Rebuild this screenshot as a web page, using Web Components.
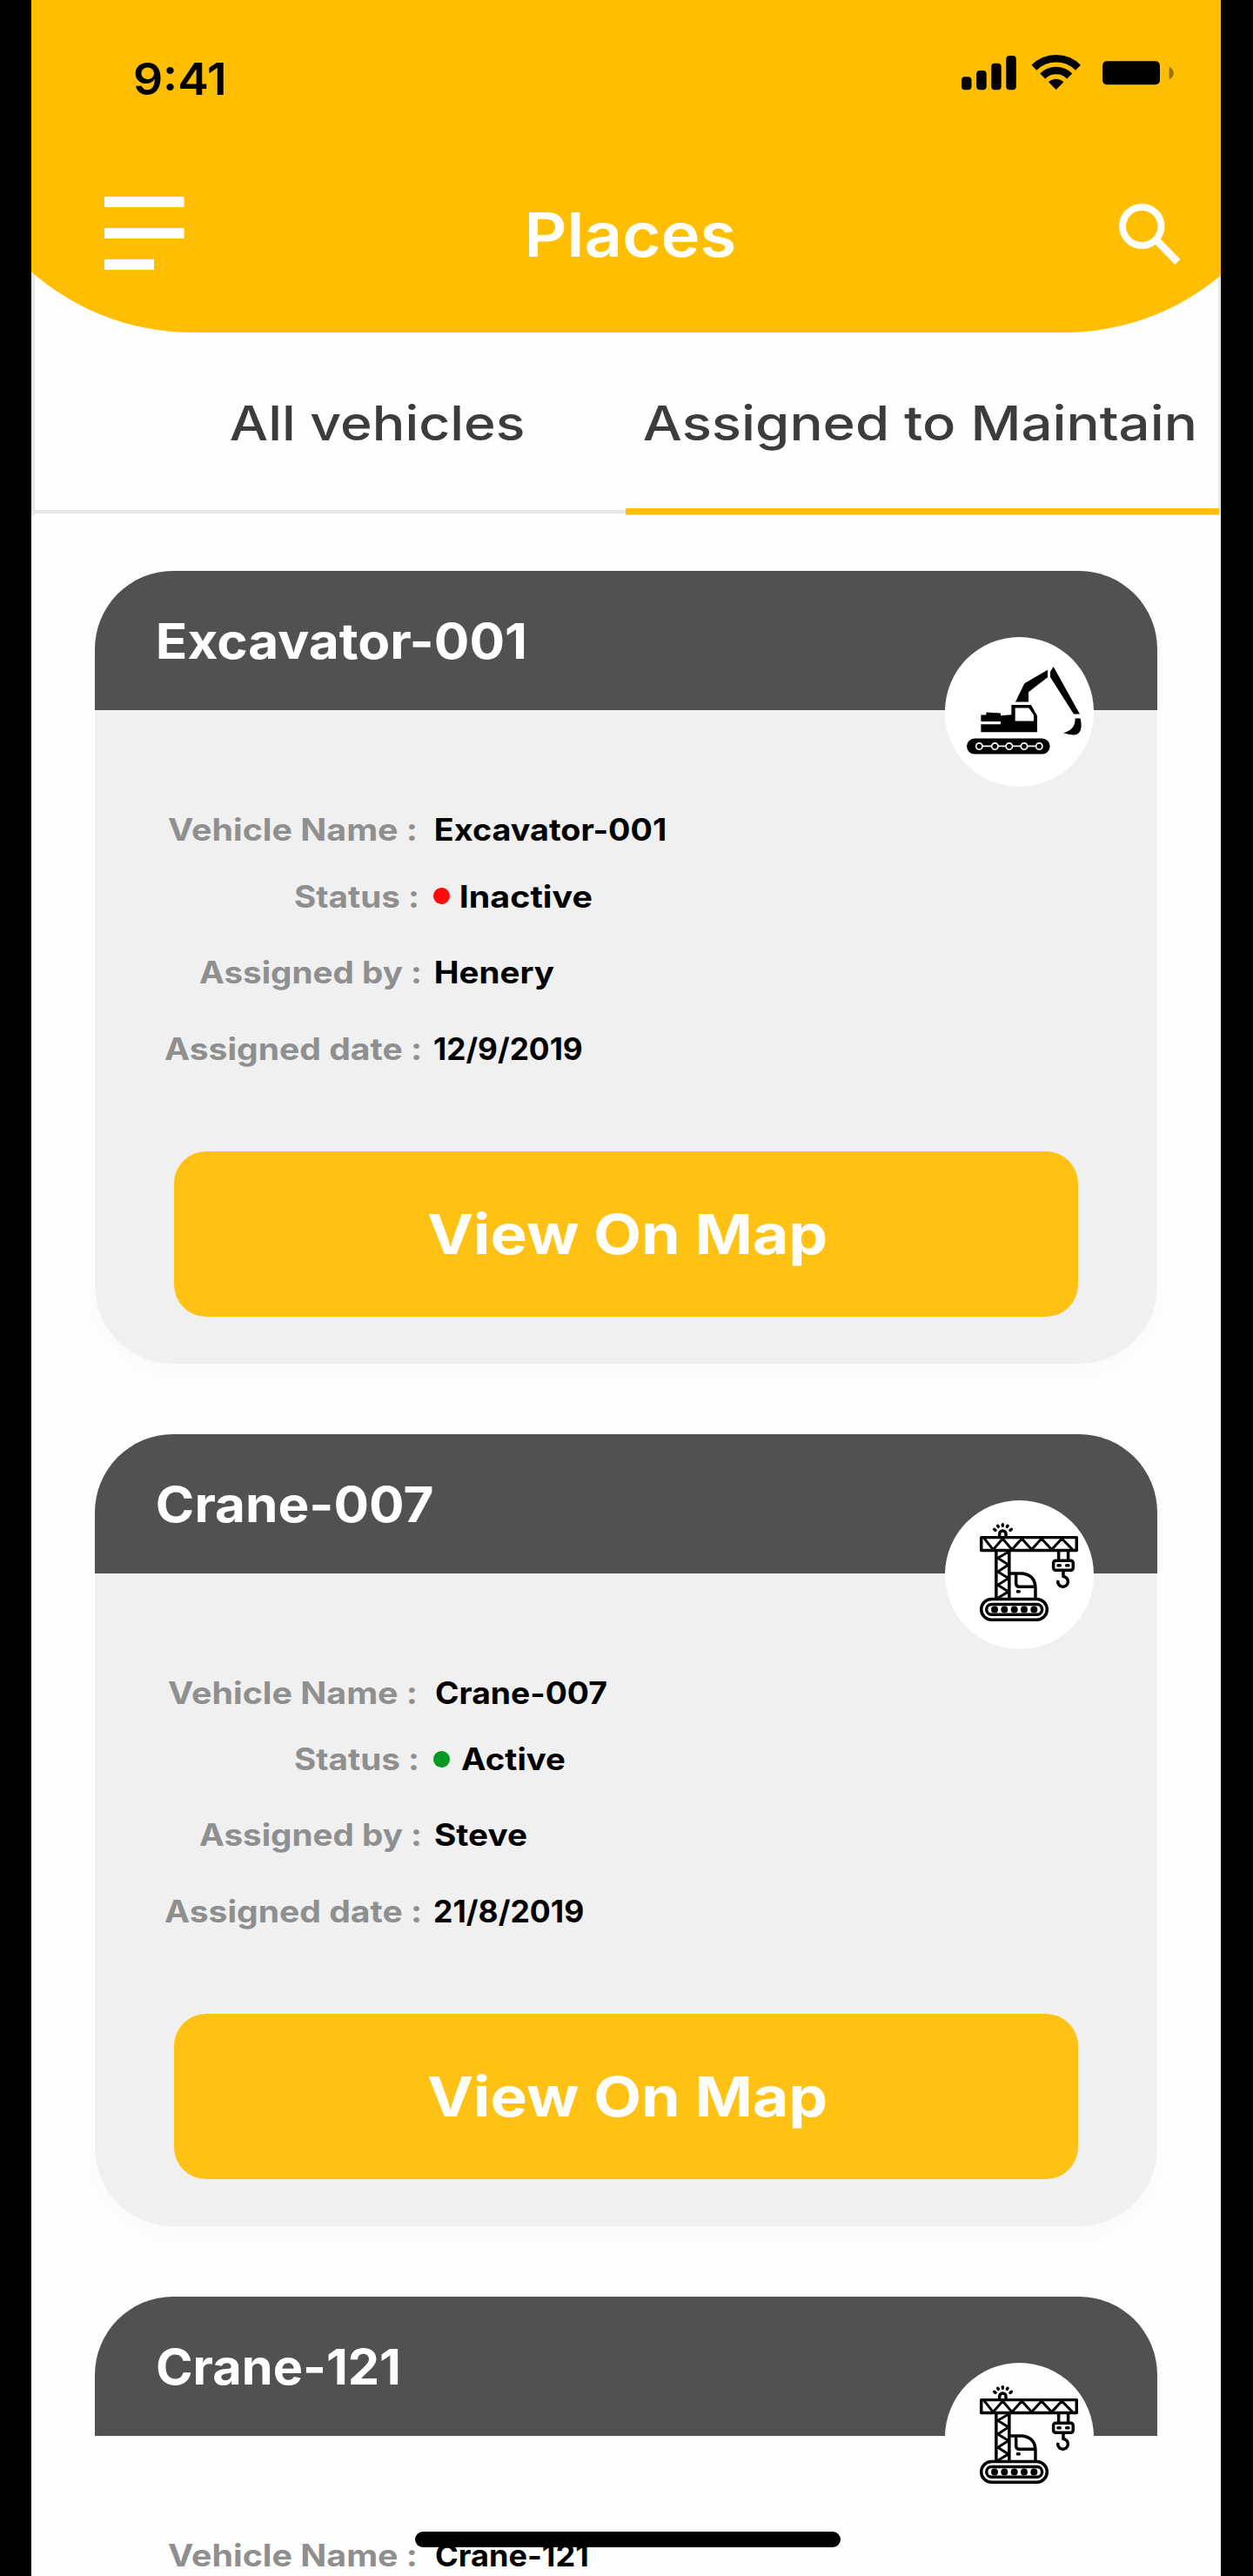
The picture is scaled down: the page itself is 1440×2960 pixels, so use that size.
<!DOCTYPE html>
<html lang="en">
<head>
<meta charset="utf-8">
<title>Places</title>
<style>
  html, body { margin: 0; background: #000; }
  body { height: 2960px; overflow: hidden; font-family: Inter, "Liberation Sans", sans-serif; }
</style>
</head>
<body>
<places-app></places-app>

<template id="t-app">
  <style>
    :host { display: block; box-sizing: border-box; width: 1440px; height: 2960px; padding: 0 37px 0 36px; background: #000; }
    main { position: relative; height: 2960px; overflow: hidden; background: #fefefe; }
    .list { display: flex; flex-direction: column; gap: 80.8px; padding: 64.4px 73px 0; }
    .home { position: absolute; left: 441px; top: 2909px; width: 489px; height: 18px; border-radius: 9px; background: #000; }
  </style>
  <main>
    <app-header></app-header>
    <app-tabs></app-tabs>
    <div class="list">
      <vehicle-card heading="Excavator-001" hx="73" hw="420.5" icon="excavator">
        <detail-row label="Vehicle Name :" start="84" lw="284" gap="24" vw="263" value="Excavator-001"></detail-row>
        <detail-row label="Status :" start="230.4" lw="140" gap="19" vw="150" value="Inactive" dot="#ff0a0a"></detail-row>
        <detail-row label="Assigned by :" start="120" lw="253" gap="19" vw="136" value="Henery"></detail-row>
        <detail-row label="Assigned date :" start="80" lw="293" gap="17" vw="170" value="12/9/2019"></detail-row>
      </vehicle-card>
      <vehicle-card heading="Crane-007" hx="71.5" hw="315.5" icon="crane">
        <detail-row label="Vehicle Name :" start="84" lw="284" gap="24" vw="196.5" value="Crane-007"></detail-row>
        <detail-row label="Status :" start="230.4" lw="140" gap="19" vw="119" value="Active" dot="#009a20"></detail-row>
        <detail-row label="Assigned by :" start="120" lw="253" gap="18" vw="105" value="Steve"></detail-row>
        <detail-row label="Assigned date :" start="80" lw="293" gap="17" vw="171.5" value="21/8/2019"></detail-row>
      </vehicle-card>
      <vehicle-card plain heading="Crane-121" hx="71.5" hw="276.5" icon="crane">
        <detail-row label="Vehicle Name :" start="84" lw="284" gap="24" vw="173.6" value="Crane-121"></detail-row>
      </vehicle-card>
    </div>
    <div class="home"></div>
  </main>
</template>

<template id="t-header">
  <style>
    :host { display: block; position: relative; z-index: 1; box-sizing: border-box; height: 382.4px; margin: 0 -100px 0 -95px; padding: 0 100px 0 95px; background: #ffbf00; border-radius: 0 0 280px 280px; }
    .status { display: flex; align-items: flex-start; justify-content: space-between; height: 226px; box-sizing: border-box; padding: 61px 52px 0 119px; }
    .time { color: #000; }
    .bar { display: flex; align-items: flex-start; justify-content: space-between; padding: 0 45px 0 84px; height: 90px; }
    .status svg { margin-top: -1px; }
    .title { color: #fff; margin: -1.5px 0 0 -46px; }
    svg { display: block; flex: none; }
    .glass { margin-top: 6px; }
  </style>
  <div class="status">
    <fit-text class="time" size="51" weight="600" line="60" w="102" text="9:41"></fit-text>
    <svg width="246" height="46" viewBox="1106 60 246 46">
      <rect x="1106" y="88.3" width="11.5" height="15" rx="4"/>
      <rect x="1123.2" y="81" width="11.5" height="22.3" rx="4"/>
      <rect x="1140.2" y="72.7" width="11.5" height="30.6" rx="4"/>
      <rect x="1157.3" y="64" width="11.5" height="39.3" rx="4"/>
      <g fill="none" stroke="#000" stroke-width="8.4">
        <path d="M1189.4,77.7 A35.8,35.8 0 0 1 1240,77.7"/>
        <path d="M1199.2,87.5 A21.9,21.9 0 0 1 1230.2,87.5"/>
      </g>
      <path d="M1214.7,103 L1206,94.3 A12.3,12.3 0 0 1 1223.4,94.3 Z"/>
      <rect x="1268" y="70.3" width="66" height="27" rx="5"/>
      <path d="M1344.6,76.7 Q1349.8,79.5 1349.8,84 Q1349.8,88.5 1344.6,91.3 Z" opacity=".4"/>
    </svg>
  </div>
  <div class="bar">
    <svg width="92" height="84" viewBox="0 0 92 84" fill="#fff">
      <rect width="91.5" height="12"/><rect y="36" width="91.5" height="12"/><rect y="72" width="57" height="12"/>
    </svg>
    <fit-text class="title" size="70" weight="600" line="90" w="235.5" text="Places"></fit-text>
    <svg class="glass" width="73" height="75" viewBox="1285 232 73 75" fill="none" stroke="#fff">
      <ellipse cx="1312.3" cy="260" rx="22.2" ry="22" stroke-width="8"/>
      <path d="M1329,276 L1353.4,301" stroke-width="8.6"/>
    </svg>
  </div>
</template>

<template id="t-tabs">
  <style>
    :host { display: flex; box-sizing: border-box; height: 279.6px; margin-top: -70px; }
    .tab { box-sizing: border-box; width: 682.5px; height: 279.6px; padding-top: 139px; color: #3e3b3d; }
    .a { border-left: 4px solid #e8e8e8; background: linear-gradient(#e8e8e8,#e8e8e8) 0 calc(100% - 1.6px) / 100% 4px no-repeat; padding-left: 225.4px; }
    .b { width: 684.5px; background: linear-gradient(#ffbf0c,#ffbf0c) 0 100% / calc(100% - 1.5px) 7.6px no-repeat, linear-gradient(#e8e8e8,#e8e8e8) 100% 0 / 3.5px calc(100% - 7.6px) no-repeat; padding-left: 21.2px; }
  </style>
  <div class="tab a"><fit-text size="55" weight="540" line="70" w="336.6" text="All vehicles"></fit-text></div>
  <div class="tab b"><fit-text size="55" weight="540" line="70" w="632.3" text="Assigned to Maintain"></fit-text></div>
</template>

<template id="t-card">
  <style>
    :host { display: block; position: relative; flex: none; width: 1221px; height: 910.6px; border-radius: 90px; background: #f0f0f0; box-shadow: 0 10px 26px rgba(0,0,0,.025); }
    :host([plain]) { background: none; box-shadow: none; }
    header { display: flex; align-items: center; box-sizing: border-box; height: 160px; border-radius: 90px 90px 0 0; background: #515151; color: #fff; padding-top: 2px; }
    .rows { height: 506.6px; box-sizing: border-box; padding-top: 117px; display: grid; grid-template-rows: 76.6px 86.9px 88.2px 40px; align-content: start; }
    .badge { position: absolute; left: 977px; top: 76px; width: 171px; height: 171.5px; border-radius: 50%; background: #fff; }
    .badge svg { display: block; width: 171px; height: 171.5px; }
    :host([plain]) .badge { background: #fefefe; }
    button { display: flex; align-items: center; justify-content: center; box-sizing: border-box; width: 1039px; height: 189.7px; margin: 0 0 0 91px; padding: 0 0 0 1px; border: 0; border-radius: 37px; background: #ffc114; color: #fff; font-family: inherit; }
  </style>
  <header></header>
  <div class="rows"><slot></slot></div>
  <button></button>
  <div class="badge"></div>
</template>

<template id="t-row">
  <style>
    :host { display: flex; align-items: center; height: 40px; }
    .label { color: #8f8f8f; }
    .value { color: #000; }
    .dot { width: 19px; height: 19px; border-radius: 50%; margin-right: 13px; }
  </style>
</template>

<template id="i-excavator">
  <svg viewBox="78 67 513 515">
    <path d="M321,291 L352,227 L432,180 V206 L366,257 V291Z"/>
    <path d="M441,187 L452,169 L543,333 H522 L441,205Z"/>
    <path d="M527,348 H545 Q549,362 548,377 Q545,405 522,405 Q504,404 486,398 Q528,388 527,348Z"/>
    <path d="M307,301 H375 L396,339 V395 H202 V368 H270 V358 H202 V336 H220 V327 L270,330 V338 L307,335Z"/>
    <path d="M320,312 H367 L384,336 V357 H320Z" fill="#fff"/>
    <rect x="153" y="417" width="287" height="54" rx="27"/>
    <g stroke="#fff" stroke-width="5">
      <path d="M196,443.500H403"/>
      <circle cx="196" cy="444" r="11"/><circle cx="250" cy="444" r="11"/><circle cx="299.500" cy="444" r="11"/><circle cx="351" cy="444" r="11"/><circle cx="403" cy="444" r="11"/>
    </g>
  </svg>
</template>

<template id="i-crane">
  <svg viewBox="78 72 513 515" fill="none" stroke="#000" stroke-width="10.5" stroke-linejoin="round">
    <rect x="203" y="200" width="329" height="45"/>
    <path stroke-width="9" d="M213,203 L244,242 L277,204 L309,242 L343,204 L377,242 L411,204 L446,242 L481,204 L518,242"/>
    <path d="M266,196 V188 A11,11 0 0 1 288,188 V196"/>
    <path stroke-linecap="round" d="M277,155V160M260,160L262,163M294,160L292,163M248,172L252,175M307,172L303,175"/>
    <path d="M254.500,248V410M299.500,248V410"/>
    <path stroke-width="9" d="M297,250 L260,271 L297,294 L260,318 L297,341 L260,364 L297,387 L260,409"/>
    <path d="M302,324 H345 Q390,330 390,376 V412M323,326 V358 Q323,370 335,370 H389"/>
    <rect x="323" y="381" width="16" height="11" rx="5" fill="#000" stroke="none"/>
    <rect x="203" y="413" width="227" height="71" rx="35.500"/>
    <rect x="221" y="431" width="192" height="35" rx="17.500"/>
    <g fill="#000" stroke="none"><circle cx="249" cy="448.500" r="12"/><circle cx="283" cy="448.500" r="12"/><circle cx="317" cy="448.500" r="12"/><circle cx="351" cy="448.500" r="12"/><circle cx="385" cy="448.500" r="12"/>
      <rect x="463" y="291" width="17" height="11" rx="5"/><rect x="492" y="291" width="17" height="11" rx="5"/></g>
    <path d="M470,248V278M503,248V278"/>
    <rect x="452" y="280" width="68" height="33" rx="8"/>
    <path d="M486,316 V335 A17.500,17.500 0 1 1 468,348"/>
  </svg>
</template>

<script>
  const stamp = (el, id) => {
    const root = el.attachShadow({ mode: 'open' });
    root.append(document.getElementById(id).content.cloneNode(true));
    return root;
  };
  const ctx = document.createElement('canvas').getContext('2d');

  // One line of text whose drawn letters span exactly `w` pixels.
  class FitText extends HTMLElement {
    connectedCallback() {
      if (this.shadowRoot) return;
      const size = this.getAttribute('size'), weight = this.getAttribute('weight');
      const line = this.getAttribute('line'), w = +this.getAttribute('w'), text = this.getAttribute('text');
      ctx.font = `${weight} ${size}px Inter, "Liberation Sans", sans-serif`;
      const m = ctx.measureText(text);
      const left = m.actualBoundingBoxLeft;
      const k = w / (m.actualBoundingBoxRight + left);
      const root = this.attachShadow({ mode: 'open' });
      root.innerHTML = `<style>
        :host { display: block; flex: none; width: ${w}px; height: ${line}px; text-align: left; }
        span { display: inline-block; white-space: pre; font: ${weight} ${size}px/${line}px Inter, "Liberation Sans", sans-serif;
          transform-origin: 0 50%; transform: translateX(${left * k}px) scaleX(${k}); }
      </style><span></span>`;
      root.querySelector('span').textContent = text;
    }
  }
  const fit = (text, size, weight, line, w, cls) => {
    const f = document.createElement('fit-text');
    for (const [k, v] of Object.entries({ text, size, weight, line, w, class: cls || '' })) f.setAttribute(k, v);
    return f;
  };

  class DetailRow extends HTMLElement {
    connectedCallback() {
      if (this.shadowRoot) return;
      const root = stamp(this, 't-row'), a = n => this.getAttribute(n);
      const label = fit(a('label'), 35, 650, 40, a('lw'), 'label');
      label.style.margin = `0 ${a('gap')}px 0 ${a('start')}px`;
      root.append(label);
      if (a('dot')) {
        const dot = document.createElement('i');
        dot.className = 'dot';
        dot.style.background = a('dot');
        root.append(dot);
      }
      root.append(fit(a('value'), 35, 670, 40, a('vw'), 'value'));
    }
  }

  class VehicleCard extends HTMLElement {
    connectedCallback() {
      if (this.shadowRoot) return;
      const root = stamp(this, 't-card');
      const title = fit(this.getAttribute('heading'), 56.5, 700, 70, this.getAttribute('hw'));
      title.style.marginLeft = this.getAttribute('hx') + 'px';
      root.querySelector('header').append(title);
      root.querySelector('.badge').append(document.getElementById('i-' + this.getAttribute('icon')).content.cloneNode(true));
      if (this.hasAttribute('plain')) root.querySelector('button').remove();
      else root.querySelector('button').append(fit('View On Map', 63.5, 700, 80, 457));
    }
  }

  customElements.define('fit-text', FitText);
  customElements.define('detail-row', DetailRow);
  customElements.define('vehicle-card', VehicleCard);
  customElements.define('app-header', class extends HTMLElement { connectedCallback() { this.shadowRoot || stamp(this, 't-header'); } });
  customElements.define('app-tabs', class extends HTMLElement { connectedCallback() { this.shadowRoot || stamp(this, 't-tabs'); } });
  customElements.define('places-app', class extends HTMLElement { connectedCallback() { this.shadowRoot || stamp(this, 't-app'); } });
</script>
</body>
</html>
